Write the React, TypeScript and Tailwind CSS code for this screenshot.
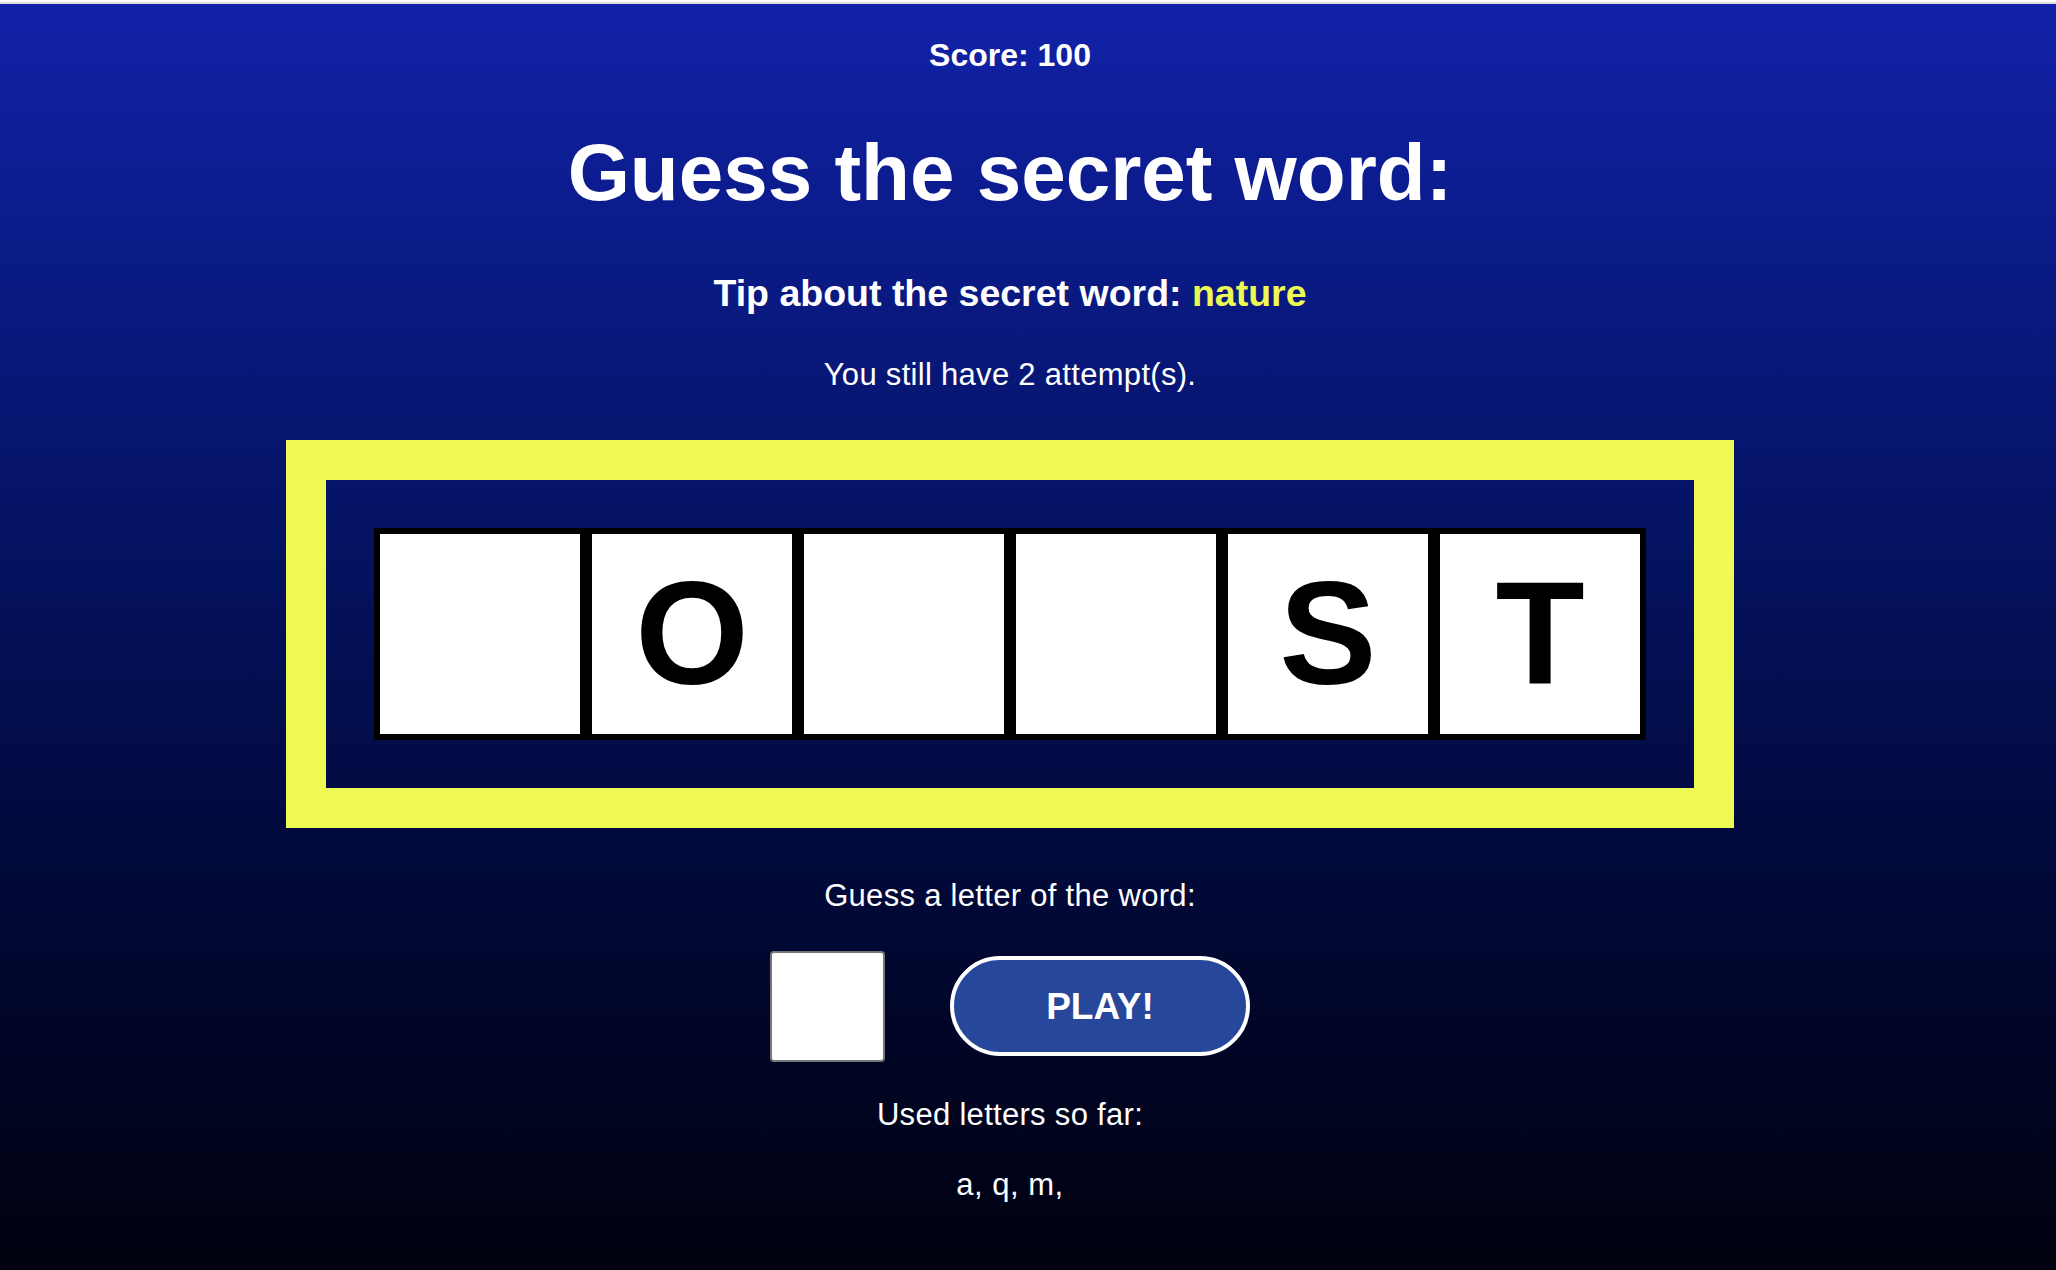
import { useState } from 'react'

const secret = ["", "O", "", "", "S", "T"]
const usedLetters = ["a", "q", "m"]

const App = () => {
  const [letter, setLetter] = useState("")

  return (
    <div className="min-h-screen w-full bg-gradient-to-b from-[#1122a9] to-[#00020f] font-['Liberation_Sans',Arial,sans-serif] text-white">
      {/* browser top edge */}
      <div className="h-[2px] bg-white" />
      <div className="h-[2px] bg-[#dedede]" />

      <div className="flex flex-col items-center pr-[36px]">
        <p className="mt-[35px] text-[32px] font-bold leading-none">Score: 100</p>

        <h1 className="mt-[62px] text-[80px] font-bold leading-none">Guess the secret word:</h1>

        <h3 className="mt-[62px] text-[37.5px] font-bold leading-none">
          Tip about the secret word: <span className="text-[#eef953]">nature</span>
        </h3>

        <p className="mt-[46px] text-[31px] leading-none tracking-[0.3px]">You still have 2 attempt(s).</p>

        {/* word board */}
        <div className="mt-[50px] border-[40px] border-[#eff953] p-[48px]">
          <div className="flex">
            {secret.map((l, i) => (
              <div
                key={i}
                className="flex h-[212px] w-[212px] items-center justify-center border-[6px] border-black bg-white text-[146px] font-bold leading-none text-black"
              >
                {l}
              </div>
            ))}
          </div>
        </div>

        <p className="mt-[52px] text-[31px] leading-none tracking-[0.3px]">Guess a letter of the word:</p>

        <form
          className="mt-[40px] flex items-center gap-[65px]"
          onSubmit={(e) => e.preventDefault()}
        >
          <input
            type="text"
            maxLength={1}
            value={letter}
            onChange={(e) => setLetter(e.target.value)}
            className="h-[111px] w-[115px] rounded-[4px] border-2 border-[#767676] bg-white text-center text-[48px] text-black outline-none"
          />
          <button
            type="submit"
            className="h-[100px] w-[300px] rounded-full border-4 border-white bg-[#27479b] text-[37px] font-bold leading-none text-white"
          >
            PLAY!
          </button>
        </form>

        <p className="mt-[37px] text-[31px] leading-none tracking-[0.3px]">Used letters so far:</p>

        <p className="mt-[39px] text-[31px] leading-none tracking-[0.5px]">
          {usedLetters.map((l) => `${l},`).join(" ")}
        </p>
      </div>
    </div>
  )
}

export default App
